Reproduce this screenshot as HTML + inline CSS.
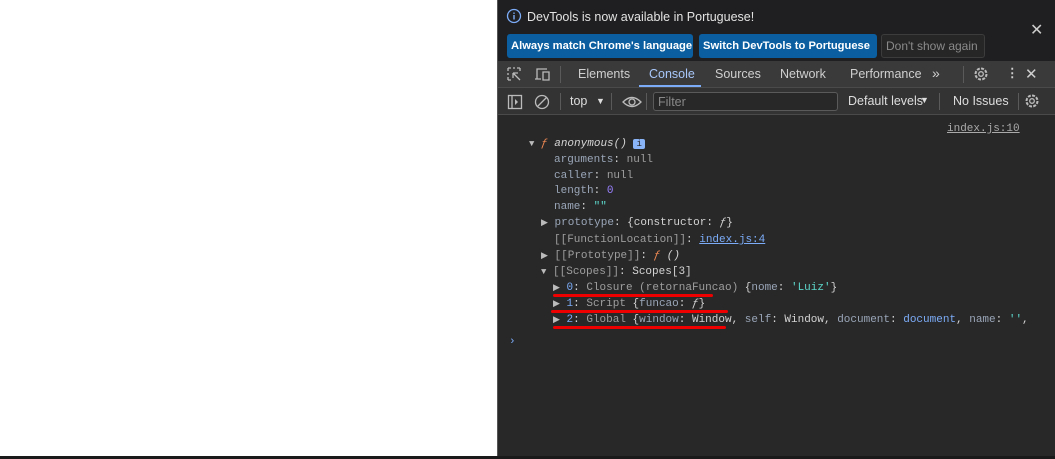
<!DOCTYPE html>
<html><head><meta charset="utf-8"><style>
*{margin:0;padding:0;box-sizing:border-box}
body{width:1055px;height:459px;overflow:hidden;background:#fff;position:relative;font-family:"Liberation Sans",sans-serif}
#dt{position:absolute;left:497px;top:0;width:558px;height:456px;background:#282828;border-left:1px solid #555}
#bot{position:absolute;left:0;top:456px;width:1055px;height:3px;background:#1a1a1a}
.banner{position:absolute;left:0;top:0;width:558px;height:61px;background:#1f1f21;color:#e3e3e3;font-size:12.5px}
.btn{position:absolute;top:34px;height:24px;line-height:24px;border-radius:3px;font-weight:bold;font-size:11.2px;padding:0 4px;color:#fff;background:#0b5fa0;white-space:nowrap;overflow:hidden}
.tabs{position:absolute;left:0;top:61px;width:558px;height:27px;background:#3a3a3a;color:#cfcfcf;font-size:12.5px;border-bottom:1px solid #4a4a4a}
.tb{position:absolute;left:0;top:88px;width:558px;height:27px;background:#333;color:#ddd;font-size:12.5px;border-bottom:1px solid #4a4a4a}
.t{position:absolute;top:6px;white-space:nowrap}
.sep{position:absolute;width:1px;height:17px;background:#5a5a5a;top:5px}
.con{position:absolute;left:0;top:116px;width:558px;font-family:"Liberation Mono",monospace;font-size:11px;color:#d4d4d4}
.l{position:absolute;white-space:pre;height:16px;line-height:16px}
.k{color:#7cacf8}.kd{color:#9aa6b8}.g{color:#9e9e9e}.n{color:#9980ff}.s{color:#5cd5c9}.f{color:#f28b54;font-style:italic}
.tri{color:#bbb;font-size:9px}
.red{position:absolute;height:3px;background:#e00;border-radius:2px}
</style></head><body>
<div id="dt">
 <div class="banner">
  <svg style="position:absolute;left:8px;top:8px" width="16" height="16"><circle cx="8" cy="8" r="6.5" fill="none" stroke="#7cacf8" stroke-width="1.3"/><rect x="7.3" y="7" width="1.4" height="4.5" fill="#7cacf8"/><rect x="7.3" y="4.5" width="1.4" height="1.4" fill="#7cacf8"/></svg>
  <div style="position:absolute;left:29px;top:10px">DevTools is now available in Portuguese!</div>
  <div class="btn" style="left:9px;width:186px">Always match Chrome's language</div>
  <div class="btn" style="left:201px;width:178px">Switch DevTools to Portuguese</div>
  <div class="btn" style="left:383px;width:104px;background:#262626;border:1px solid #3c3c3c;color:#8a8a8a;font-weight:normal;line-height:22px;font-size:12px">Don't show again</div>
  <div style="position:absolute;left:532px;top:20px;font-size:16px;color:#ccc">✕</div>
 </div>
 <div class="tabs">
  <svg style="position:absolute;left:9px;top:6px" width="16" height="16"><path d="M1 1h3M6 1h2M10 1h3M1 1v3M1 6v2M1 10v3M1 13h3M13 1v3M6 6l7 7M6 6h5M6 6v5" stroke="#bbb" stroke-width="1.3" fill="none"/></svg>
  <svg style="position:absolute;left:36px;top:6px" width="18" height="16"><path d="M3 12V2h10M1 12h6M9 5h6v8H9z" stroke="#bbb" stroke-width="1.3" fill="none"/></svg>
  <div class="sep" style="left:62px"></div>
  <div class="t" style="left:80px">Elements</div>
  <div class="t" style="left:151px;color:#a8c7fa">Console</div>
  <div style="position:absolute;left:141px;top:24px;width:62px;height:2px;background:#7cacf8"></div>
  <div class="t" style="left:217px">Sources</div>
  <div class="t" style="left:282px">Network</div>
  <div class="t" style="left:352px">Performance</div>
  <div class="t" style="left:434px;font-size:14px;top:4px">»</div>
  <div class="sep" style="left:465px"></div>
  <svg style="position:absolute;left:475px;top:5px" width="16" height="16"><circle cx="8" cy="8" r="5.5" fill="none" stroke="#bbb" stroke-width="2" stroke-dasharray="3 1.3"/><circle cx="8" cy="8" r="2.3" fill="none" stroke="#bbb" stroke-width="1.3"/></svg>
  <div class="t" style="left:508px;font-weight:bold;top:4px">⋮</div>
  <div class="t" style="left:527px;font-size:15px;top:4px">✕</div>
 </div>
 <div class="tb">
  <svg style="position:absolute;left:9px;top:6px" width="16" height="16"><rect x="1.5" y="1.5" width="13" height="13" fill="none" stroke="#bbb" stroke-width="1.3"/><path d="M5 2v12" stroke="#bbb" stroke-width="1.3"/><path d="M8 5l3 3-3 3z" fill="#bbb"/></svg>
  <svg style="position:absolute;left:36px;top:6px" width="16" height="16"><circle cx="8" cy="8" r="6.5" fill="none" stroke="#bbb" stroke-width="1.3"/><path d="M3.5 12.5l9-9" stroke="#bbb" stroke-width="1.3"/></svg>
  <div class="sep" style="left:62px"></div>
  <div class="t" style="left:72px">top</div>
  <div class="t" style="left:98px;font-size:9px;top:8px">▼</div>
  <div class="sep" style="left:113px"></div>
  <svg style="position:absolute;left:124px;top:7px" width="20" height="14"><path d="M1 7Q10 -2 19 7Q10 16 1 7z" fill="none" stroke="#bbb" stroke-width="1.3"/><circle cx="10" cy="7" r="3" fill="none" stroke="#bbb" stroke-width="1.3"/></svg>
  <div class="sep" style="left:148px"></div>
  <div style="position:absolute;left:155px;top:4px;width:185px;height:19px;border:1px solid #5a5a5a;border-radius:3px;background:#282828;color:#888;padding:2px 4px">Filter</div>
  <div class="t" style="left:350px">Default levels</div>
  <div class="t" style="left:422px;font-size:9px;top:7px">▼</div>
  <div class="sep" style="left:441px"></div>
  <div class="t" style="left:455px">No Issues</div>
  <div class="sep" style="left:520px"></div>
  <svg style="position:absolute;left:526px;top:5px" width="16" height="16"><circle cx="8" cy="8" r="5.5" fill="none" stroke="#bbb" stroke-width="2" stroke-dasharray="3 1.3"/><circle cx="8" cy="8" r="2.3" fill="none" stroke="#bbb" stroke-width="1.3"/></svg>
 </div>
 <div class="con">
  <div class="l" style="left:449px;top:5px;color:#aaa;text-decoration:underline">index.js:10</div>
  <div class="l" style="left:31px;top:20px"><span class="tri">▼</span> <span class="f">ƒ</span> <i>anonymous()</i> <span style="background:#8ab4f8;color:#222;font-size:9px;padding:0 3px;border-radius:2px">i</span></div>
  <div class="l" style="left:56px;top:36px"><span class="kd">arguments</span>: <span class="g">null</span></div>
  <div class="l" style="left:56px;top:52px"><span class="kd">caller</span>: <span class="g">null</span></div>
  <div class="l" style="left:56px;top:67px"><span class="kd">length</span>: <span class="n">0</span></div>
  <div class="l" style="left:56px;top:83px"><span class="kd">name</span>: <span class="s">""</span></div>
  <div class="l" style="left:43px;top:99px"><span class="tri">▶</span> <span class="kd">prototype</span>: {constructor: <i>ƒ</i>}</div>
  <div class="l" style="left:56px;top:116px"><span class="g">[[FunctionLocation]]</span>: <span class="k" style="text-decoration:underline">index.js:4</span></div>
  <div class="l" style="left:43px;top:132px"><span class="tri">▶</span> <span class="g">[[Prototype]]</span>: <span class="f">ƒ</span> <i>()</i></div>
  <div class="l" style="left:43px;top:148px"><span class="tri">▼</span> <span class="g">[[Scopes]]</span>: Scopes[3]</div>
  <div class="l" style="left:55px;top:164px"><span class="tri">▶</span> <span class="k">0</span>: <span class="g">Closure (retornaFuncao)</span> {<span class="kd">nome</span>: <span class="s">'Luiz'</span>}</div>
  <div class="l" style="left:55px;top:180px"><span class="tri">▶</span> <span class="k">1</span>: <span class="g">Script</span> {<span class="kd">funcao</span>: <i>ƒ</i>}</div>
  <div class="l" style="left:55px;top:196px"><span class="tri">▶</span> <span class="k">2</span>: <span class="g">Global</span> {<span class="kd">window</span>: Window, <span class="kd">self</span>: Window, <span class="kd">document</span>: <span class="k">document</span>, <span class="kd">name</span>: <span class="s">''</span>,</div>
  <div class="l" style="left:11px;top:218px;color:#7cacf8">›</div>
 </div>
 <div class="red" style="left:55px;top:294px;width:160px"></div>
 <div class="red" style="left:53px;top:310px;width:177px"></div>
 <div class="red" style="left:55px;top:326px;width:173px"></div>
</div>
<div id="bot"></div>
</body></html>
